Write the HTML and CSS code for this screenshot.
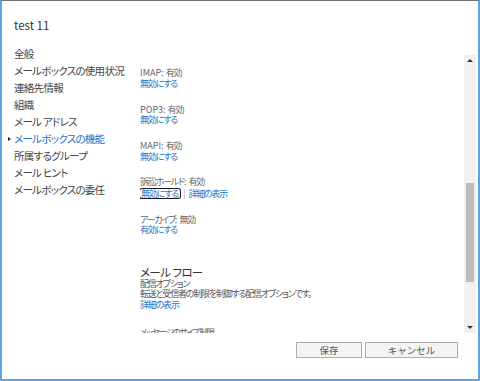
FILE: index.html
```html
<!DOCTYPE html>
<html lang="ja">
<head>
<meta charset="utf-8">
<title>test 11</title>
<link rel="stylesheet" href="styles.css">
</head>
<body>
<div class="window">
  <header class="hdr"><h1 class="title">test 11</h1></header>
  <div class="main">
    <nav class="nav">
      <ul class="nav-list">
        <li class="nav-item">全般</li>
        <li class="nav-item">メールボックスの使用状況</li>
        <li class="nav-item">連絡先情報</li>
        <li class="nav-item">組織</li>
        <li class="nav-item">メール アドレス</li>
        <li class="nav-item is-active">メールボックスの機能</li>
        <li class="nav-item">所属するグループ</li>
        <li class="nav-item">メール ヒント</li>
        <li class="nav-item">メールボックスの委任</li>
      </ul>
    </nav>
    <div class="content">
      <div class="group">
        <div class="label"><span class="latin">IMAP: </span>有効</div>
        <div class="line"><a class="link">無効にする</a></div>
      </div>
      <div class="group">
        <div class="label"><span class="latin">POP3: </span>有効</div>
        <div class="line"><a class="link">無効にする</a></div>
      </div>
      <div class="group">
        <div class="label"><span class="latin">MAPI: </span>有効</div>
        <div class="line"><a class="link">無効にする</a></div>
      </div>
      <div class="group">
        <div class="label">訴訟ホールド<span class="latin">: </span>有効</div>
        <div class="line line-focus"><a class="link focus">無効にする</a><span class="sep">|</span><a class="link">詳細の表示</a></div>
      </div>
      <div class="group group-last">
        <div class="label">アーカイブ<span class="latin">: </span>無効</div>
        <div class="line"><a class="link">有効にする</a></div>
      </div>
      <section class="section">
        <h2 class="section-title">メール フロー</h2>
        <div class="text">配信オプション</div>
        <div class="text">転送と受信者の制限を制御する配信オプションです。</div>
        <div class="text"><a class="link">詳細の表示</a></div>
        <div class="text sub">メッセージのサイズ制限</div>
      </section>
    </div>
    <div class="scrollbar">
      <div class="arrow"><span class="tri-up"></span></div>
      <div class="track"><div class="thumb"></div></div>
      <div class="arrow"><span class="tri-down"></span></div>
    </div>
  </div>
  <footer class="foot">
    <button class="btn btn-save">保存</button>
    <button class="btn btn-cancel">キャンセル</button>
  </footer>
</div>
</body>
</html>
```

FILE: styles.css
```css
* { box-sizing: border-box; }
html, body { margin: 0; padding: 0; background: #fff; }
body {
  font-family: "Noto Sans CJK JP", "Noto Sans", sans-serif;
  font-feature-settings: "palt";
  color: #444;
}
.window {
  width: 480px;
  height: 381px;
  border-top: 1px solid #6f6f6f;
  border-left: 2px solid #5ea4e4;
  border-right: 2px solid #5ea4e4;
  border-bottom: 2px solid #5ea4e4;
  display: flex;
  flex-direction: column;
  overflow: hidden;
}
.hdr {
  height: 39px;
  padding: 14px 0 0 12px;
  flex: none;
}
.title {
  margin: 0;
  font-size: 11.5px;
  line-height: 20px;
  font-weight: 400;
  color: #333;
}
.main {
  height: 293px;
  flex: none;
  display: flex;
}
.nav {
  width: 138px;
  padding: 6.25px 0 0 12px;
  flex: none;
}
.nav-list { list-style: none; margin: 0; padding: 0; }
.nav-item {
  font-size: 10.5px;
  line-height: 16.9px;
  letter-spacing: -0.7px;
  color: #444;
  white-space: nowrap;
  position: relative;
}
.nav-item.is-active { color: #1e74c9; }
.nav-item.is-active::before {
  content: "";
  position: absolute;
  left: -6px;
  top: 6px;
  border-left: 3px solid #222;
  border-top: 2.5px solid transparent;
  border-bottom: 2.5px solid transparent;
}
.content {
  flex: 1;
  overflow: hidden;
  padding-top: 28.25px;
  font-size: 9px;
  letter-spacing: -1.2px;
}
.latin { letter-spacing: 0; }
.group { margin-bottom: 15.4px; }
.group-last { margin-bottom: 0; }
.label { line-height: 10.5px; color: #666; white-space: nowrap; }
.line { line-height: 10.5px; white-space: nowrap; }
.line-focus { margin-top: 1px; }
.link { color: #1e74c9; }
.focus {
  display: inline-block;
  line-height: 9px;
  padding: 0 2px 0 1px;
  border-radius: 2px;
  box-shadow: 0 0 0 1px #1a1a1a;
}
.sep { color: #999; margin: 0 3px 0 3px; letter-spacing: 0; }
.section { margin-top: 28.75px; }
.section-title {
  margin: 0;
  font-size: 11.5px;
  line-height: 14px;
  font-weight: 400;
  letter-spacing: -0.6px;
  color: #333;
}
.text { line-height: 10.7px; color: #555; white-space: nowrap; }
.sub { margin-top: 14.9px; font-size: 8.5px; }
.scrollbar {
  width: 12px;
  margin: 15px 2px 0 0;
  background: #f0f0f0;
  display: flex;
  flex-direction: column;
  flex: none;
}
.arrow {
  height: 11px;
  display: flex;
  align-items: center;
  justify-content: center;
  flex: none;
}
.tri-up {
  border-bottom: 3px solid #333;
  border-left: 3px solid transparent;
  border-right: 3px solid transparent;
}
.tri-down {
  border-top: 3px solid #333;
  border-left: 3px solid transparent;
  border-right: 3px solid transparent;
}
.track { flex: 1; padding-top: 117px; }
.thumb { width: 8px; height: 99px; margin-left: 2px; background: #bdbdbd; }
.foot {
  flex: 1;
  display: flex;
  justify-content: flex-end;
  align-items: flex-start;
  gap: 3px;
  padding: 9px 20px 0 0;
}
.btn {
  height: 16px;
  padding: 0;
  border: 1px solid #adadad;
  background: #f3f3f3;
  font-family: inherit;
  font-size: 9.5px;
  line-height: 14px;
  color: #555;
}
.btn-save { width: 66px; }
.btn-cancel { width: 93px; }
```
